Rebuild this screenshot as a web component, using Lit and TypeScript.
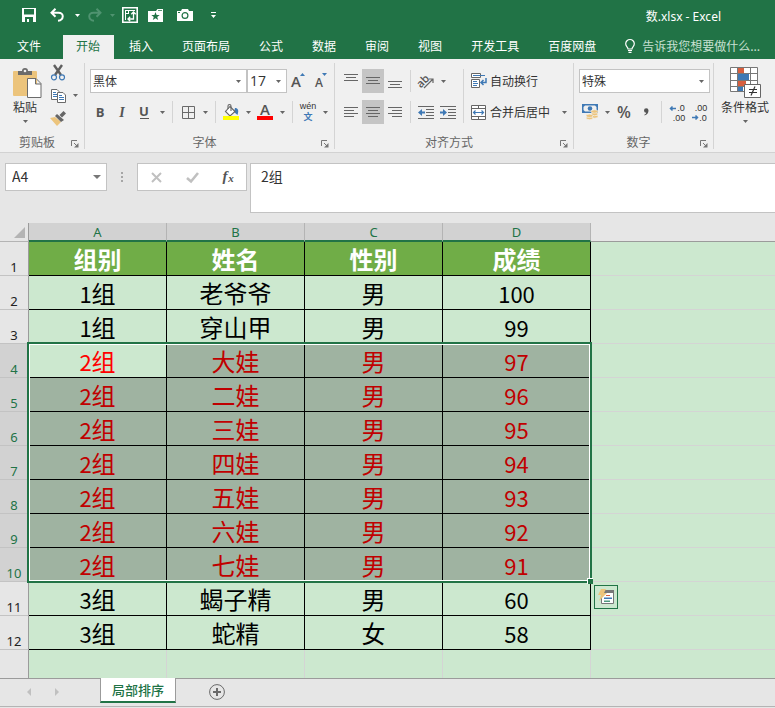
import { LitElement, html, css, svg, nothing } from "lit";
import { customElement, property } from "lit/decorators.js";
import { classMap } from "lit/directives/class-map.js";

const lines = (rows: number[][]) =>
  rows.map(([x, y, w]) => svg`<rect x=${x} y=${y} width=${w} height="1" fill="#666"/>`);

const grid = svg`<path fill="none" stroke="#6a6a6a" d="M.5 .5h12v12h-12zM6.5 0v13M0 6.5h13"/>`;

/* name -> [width, height, drawing] */
const ICONS: Record<string, [number, number, unknown]> = {
  save: [14, 14, svg`<path fill="#fff" fill-rule="evenodd" d="M0 0h14v14H0zM2 1v5.500h10V1zM3 9v5h2v-3h2v3h4V9z"/>`],
  undo: [14, 14, svg`<path fill="none" stroke="#fff" stroke-width="2" d="M5.500 .7L1.500 4.700l4 4M1.500 4.700H8.500c6 0 5.500 7.500-.5 8"/>`],
  redo: [14, 14, svg`<path fill="none" stroke="#4f9370" stroke-width="2" d="M8.500 .7l4 4-4 4M12.500 4.700H5.500c-6 0-5.500 7.500.5 8"/>`],
  pivot: [16, 16, svg`<path fill="none" stroke="#fff" stroke-width="1.600" d="M.8 .8h14.400v14.400H.8z"/><path fill="none" stroke="#fff" d="M3 3.500h10M3.500 3v10M6.500 3v3M3 6.500h4"/><path fill="none" stroke="#fff" stroke-width="1.300" d="M11.500 5v7H6M9.300 7.200l2.200-2.200 2.200 2.200M8.200 9.800L6 12l2.200 2.200"/>`],
  folder: [15, 13, svg`<path fill="#fff" d="M0 2h8l1.500-2H15v13H0z"/><path fill="#217346" d="M7.500 3l1.100 3h3.100L9.200 8l1 3.100-2.700-1.900-2.700 1.900 1-3.100L3.300 6h3.100zM10 1.200h4v.8h-4z"/>`],
  camera: [16, 12, svg`<path fill="#fff" d="M0 2h4l1-2h6l1 2h4v10H0z"/><circle cx="8" cy="6.500" r="2.900" fill="none" stroke="#217346" stroke-width="1.200"/><path fill="#217346" d="M1 3h2v1H1z"/>`],
  custom: [5, 6, svg`<path fill="#fff" d="M0 0h5v1H0zM0 3h5L2.500 6z"/>`],
  bulb: [10, 14, svg`<path fill="none" stroke="#fff" stroke-width="1.200" d="M3 10c0-2-2.300-2.500-2.300-5.200a4.300 4.300 0 0 1 8.600 0C9.300 7.500 7 8 7 10z"/><path fill="#fff" d="M3 11h4v1H3zM3.500 12.700h3v1.300h-3z"/>`],
  paste: [33, 31, svg`<g transform="translate(4 0)"><rect y="4" width="24" height="25" rx="1" fill="#ecc47c"/><path fill="#6b6b6b" d="M5 8V4h4a3 3 0 0 1 6 0h4v4z"/><circle cx="12" cy="4" r="1.300" fill="#f0f0f0"/><path fill="#fff" stroke="#6b6b6b" d="M14.500 11.500h8.500l5 5v14H14.500zM22.500 11.500v5.500H28"/></g>`],
  cut: [14, 16, svg`<path fill="none" stroke="#5f5f5f" stroke-width="2.400" d="M3 0l7 10M11 0L4 10"/><circle cx="3" cy="12.300" r="2.500" fill="none" stroke="#3f79b5" stroke-width="1.200"/><circle cx="11" cy="12.300" r="2.500" fill="none" stroke="#3f79b5" stroke-width="1.200"/>`],
  copy: [15, 14, svg`<path fill="#fff" stroke="#6b6b6b" d="M.5 .5H6l2 2v8H.5z"/><path stroke="#3f79b5" d="M2 3.500h3M2 5.500h4M2 7.500h4"/><path fill="#fff" stroke="#6b6b6b" d="M6.500 3.500H12l2.500 2.500v7.500h-8z"/><path stroke="#3f79b5" d="M8 6.500h3M8 8.500h5M8 10.500h5"/>`],
  brush: [16, 15, svg`<path fill="#ecc47c" d="M0 7l5-1 6 5-4 4z"/><path fill="#666" d="M5 5l2-2 7 6-3 2z"/><path fill="#666" d="M9.500 4L13.500 0 16 2.500 12 6.500z"/>`],
  bold: [22, 22, svg`<text x="10" y="16" class="g b">B</text>`],
  italic: [22, 22, svg`<text x="10" y="16" class="g s">I</text>`],
  underline: [22, 22, svg`<text x="10" y="15" class="g b">U</text><rect x="6" y="17" width="9" height="1" fill="#555"/>`],
  grow: [16, 18, svg`<text x="6" y="15" class="g m">A</text><path fill="#3f79b5" d="M10 4h5l-2.500-3z"/>`],
  shrink: [16, 18, svg`<text x="7" y="15" class="g n">A</text><path fill="#3f79b5" d="M10 1h5l-2.500 3z"/>`],
  borders: [13, 13, grid],
  fill: [16, 16, svg`<path fill="#3f79b5" d="M12 4c3 0 4 2 2.500 7L11 8z"/><path fill="#fff" stroke="#666" stroke-width="1.100" d="M7 2.500l5 5L7 12 2.500 7.500z"/><path fill="none" stroke="#666" stroke-width="1.100" d="M5 5V2q0-1.500 1.500-1.500T8 2v5"/><rect y="12" width="16" height="4" fill="#ff0"/>`],
  color: [16, 16, svg`<text x="8" y="11" class="g b m">A</text><rect y="12" width="16" height="4" fill="red"/>`],
  wen: [20, 20, svg`<text x="10" y="7" class="g w">wén</text><text x="10" y="18" class="g cn">文</text>`],
  top: [14, 14, lines([[0, 0, 14], [2, 3, 10], [0, 6, 14]])],
  middle: [14, 14, lines([[0, 3, 14], [2, 6, 10], [0, 9, 14]])],
  bottom: [14, 14, lines([[0, 7, 14], [2, 10, 10], [0, 13, 14]])],
  left: [14, 11, lines([[0, 0, 14], [0, 3, 10], [0, 6, 14], [0, 9, 10]])],
  center: [14, 11, lines([[0, 0, 14], [2, 3, 10], [0, 6, 14], [2, 9, 10]])],
  right: [14, 11, lines([[0, 0, 14], [4, 3, 10], [0, 6, 14], [4, 9, 10]])],
  orient: [18, 16, svg`<text x="6" y="11" class="g o" transform="rotate(-45 7 8)">ab</text><path fill="none" stroke="#666" stroke-width="1.200" d="M7 15l8.500-8.500M12 6h4v4"/>`],
  outdent: [16, 13, svg`${lines([[0, 0, 16], [8, 3, 8], [8, 6, 8], [8, 9, 8], [0, 12, 16]])}<path fill="#3f79b5" d="M0 6.500L4 3v2.500h3v2H4V10z"/>`],
  indent: [16, 13, svg`${lines([[0, 0, 16], [8, 3, 8], [8, 6, 8], [8, 9, 8], [0, 12, 16]])}<path fill="#3f79b5" d="M7 6.500L3 3v2.500H0v2h3V10z"/>`],
  wrap: [16, 16, svg`<path fill="#fff" stroke="#666" d="M9.500 4.500V.5h-9v4zM.5 6.500h8v8h-8z"/><path stroke="#3f79b5" d="M2 2.500h12M2 8.500h4M2 10.500h5M2 12.500h4"/><path fill="none" stroke="#3f79b5" stroke-width="1.500" d="M15 5v4.500h-4.500M12.500 7l-2.500 2.500L12.500 12"/>`],
  merge: [15, 15, svg`<path fill="#fff" stroke="#666" d="M.5 .5h14v14H.5zM0 3.500h15M0 11.500h15M7.500 0v3.500M7.500 11.500v3"/><path fill="none" stroke="#3f79b5" stroke-width="1.200" d="M2 7.500h11M4.500 5.500l-2 2 2 2M10.500 5.500l2 2-2 2"/>`],
  money: [16, 16, svg`<path fill="#3f79b5" d="M0 0h16v9H0z"/><path fill="#f0f0f0" d="M3 1.500h10l1.500 1.500v3L13 7.500H3L1.500 6V3z"/><circle cx="8" cy="4.500" r="2.300" fill="#3f79b5"/><g fill="#ecc47c" stroke="#f0f0f0" stroke-width=".7"><ellipse cx="12.500" cy="12.500" rx="3.500" ry="1.700"/><ellipse cx="12.500" cy="10" rx="3.500" ry="1.700"/><ellipse cx="12.500" cy="7.500" rx="3.500" ry="1.700"/><ellipse cx="7.500" cy="14" rx="3.500" ry="1.700"/><ellipse cx="7.500" cy="11.800" rx="3.500" ry="1.700"/></g>`],
  percent: [22, 22, svg`<text x="11" y="17" class="g p">%</text>`],
  comma: [6, 8, svg`<path fill="#555" d="M1 2.500a2.200 2.200 0 0 1 4.500 0C5.500 5 4 7 1.500 7.500v-1C2.700 6 3.200 5.500 3.200 4.700A2.200 2.200 0 0 1 1 2.500z"/>`],
  decinc: [16, 17, svg`<path fill="none" stroke="#3f79b5" stroke-width="1.500" d="M1 4.500h6M3.500 2.500l-2 2 2 2"/><text x="12" y="7" class="g d">.0</text><text x="10" y="17" class="g d">.00</text>`],
  decdec: [16, 17, svg`<text x="10" y="7" class="g d">.00</text><path fill="none" stroke="#3f79b5" stroke-width="1.500" d="M1 13.500h6M4.500 11.500l2 2-2 2"/><text x="12" y="17" class="g d">.0</text>`],
  condition: [31, 31, svg`<path fill="#fff" d="M1 1h27v24H1z"/><path fill="#d75f3f" d="M8 1h6v6H8zM8 14h8v6H8z"/><path fill="#3f79b5" d="M8 7h11v6H8zM8 20h5v5H8z"/><path fill="none" stroke="#777" d="M.5 .5h27v24H.5zM7.500 0v25M20.500 0v20M0 6.500h28M0 13.500h28M0 19.500h28"/><path fill="#fff" stroke="#666" d="M14.500 17.500h16v13h-16z"/><path fill="none" stroke="#333" stroke-width="1.200" d="M19 22.500h8M19 25.500h8M25 19.500l-4 9"/>`],
  launch: [8, 8, svg`<path fill="none" stroke="#777" d="M.5 6V.5H6M3 3l3 3"/><path fill="#777" d="M7.500 3v4.500H3z"/>`],
  arrow: [5, 3, svg`<path fill="currentColor" d="M0 0h5L2.500 3z"/>`],
  name: [8, 4, svg`<path fill="#777" d="M0 0h8L4 4z"/>`],
  dots: [2, 11, svg`<path fill="#a6a6a6" d="M0 0h2v2H0zM0 4h2v2H0zM0 8h2v2H0z"/>`],
  cancel: [11, 11, svg`<path stroke="#c0c0c0" stroke-width="2" d="M1 1l9 9M10 1l-9 9"/>`],
  accept: [13, 11, svg`<path fill="none" stroke="#c0c0c0" stroke-width="2.600" d="M1 6l4 3.500L12 1"/>`],
  fx: [16, 16, svg`<text x="5" y="12" class="g f">f</text><text x="11" y="13" class="g x">x</text>`],
  corner: [11, 11, svg`<path fill="#b4b4b4" d="M11 0v11H0z"/>`],
  prev: [4, 8, svg`<path fill="#c0c0c0" d="M4 0v8L0 4z"/>`],
  next: [4, 8, svg`<path fill="#c0c0c0" d="M0 0v8l4-4z"/>`],
  plus: [16, 16, svg`<circle cx="8" cy="8" r="7.400" fill="none" stroke="#6a6a6a"/><path stroke="#6a6a6a" stroke-width="2" d="M4 8h8M8 4v8"/>`],
  tag: [16, 16, svg`<path fill="#fff" stroke="#777" d="M3.500 2.500h12v12h-12z"/><path fill="#777" d="M4 1h12v3H4z"/><path fill="#d75f3f" d="M8 6h4v1H8z"/><path fill="#3f79b5" d="M6 8.500h8V10H6z"/><path fill="#4f9b7f" d="M6 11.500h6V13H6z"/><path fill="#ecc47c" d="M3 0h5L6 4h3L1 12l2-6H0z"/>`],
};

@customElement("x-icon")
class XIcon extends LitElement {
  @property() name = "";
  static styles = css`
    :host { display: inline-flex; flex: none; }
    svg { display: block; overflow: visible; }
    .g { font: 13px "Open Sans", sans-serif; fill: #555; text-anchor: middle; }
    .b { font-weight: 700; }
    .s { font: italic bold 14px "Liberation Serif", serif; }
    .m { font-size: 15px; font-weight: 600; }
    .n { font-size: 12px; font-weight: 600; }
    .w { font: 9px "Liberation Sans", sans-serif; fill: #333; }
    .cn { font: bold 9px "Noto Sans CJK SC", sans-serif; fill: #3f79b5; }
    .o { font-size: 11px; font-weight: 600; }
    .p { font-size: 16px; font-weight: 600; }
    .d { font: 9px "Liberation Sans", sans-serif; fill: #333; }
    .f { font: italic bold 15px "Liberation Serif", serif; }
    .x { font: italic bold 11px "Liberation Serif", serif; }
  `;
  render() {
    const [w, h, body] = ICONS[this.name];
    return html`<svg width=${w} height=${h} viewBox="0 0 ${w} ${h}" aria-hidden="true">${body}</svg>`;
  }
}

const TABS = ["文件", "开始", "插入", "页面布局", "公式", "数据", "审阅", "视图", "开发工具", "百度网盘"];
const COLUMNS = ["A", "B", "C", "D"];
const HEADINGS = ["组别", "姓名", "性别", "成绩"];
const ROWS: [string, string, string, string][] = [
  ["1", "老爷爷", "男", "100"],
  ["1", "穿山甲", "男", "99"],
  ["2", "大娃", "男", "97"],
  ["2", "二娃", "男", "96"],
  ["2", "三娃", "男", "95"],
  ["2", "四娃", "男", "94"],
  ["2", "五娃", "男", "93"],
  ["2", "六娃", "男", "92"],
  ["2", "七娃", "男", "91"],
  ["3", "蝎子精", "男", "60"],
  ["3", "蛇精", "女", "58"],
];
const SELECTED = { from: 4, to: 10 };
const HEAD_HEIGHT = 19;
const ROW_HEIGHT = 34;

@customElement("app-root")
class AppRoot extends LitElement {
  static styles = css`
    :host {
      display: flex; flex-direction: column; min-height: 100vh; overflow: hidden;
      background: #e6e6e6; color: #333;
      font: 12px/16px "Noto Sans CJK SC", sans-serif;
    }
    * { box-sizing: border-box; }
    button, input, select, textarea {
      font: inherit; color: inherit; background: none; border: 0; margin: 0; padding: 0;
      border-radius: 0; outline: none; appearance: none;
    }
    button { display: flex; align-items: center; justify-content: center; flex: none; white-space: nowrap; }

    header { background: #217346; color: #fff; }
    .title { display: flex; align-items: center; height: 32px; padding: 0 54px 2px 18px; }
    .title h1 { font: 12px/16px "Noto Sans", "Noto Sans CJK SC", sans-serif; margin: 4px 0 0 auto; }
    .q { width: 22px; height: 22px; }
    .qa { width: 12px; height: 22px; margin-right: 1px; }
    .wide { width: 29px; }
    .undo { margin-left: 2px; }
    .off { color: #4f9370; }
    .tabs { display: flex; align-items: flex-end; height: 27px; }
    .tab { height: 24px; margin: 0 1px; padding: 0 14px 2px 13px; }
    .tab.file { padding: 0 20px 2px 16px; }
    .tab.on { background: #f0f0f0; color: #217346; }
    .tell { display: flex; align-items: center; flex: 1; min-width: 0; height: 24px; gap: 7px; padding: 0 4px 2px 14px; }
    .tell input { flex: 1; min-width: 0; color: #c8e0d2; }

    .ribbon { display: flex; height: 94px; background: #f0f0f0; border-bottom: 1px solid #d2d2d2; }
    .group { display: flex; flex-direction: column; justify-content: space-between; flex: none; padding: 3px 3px 0 5px; border-right: 1px solid #d4d4d4; margin: 4px 0 3px; }
    .group.last { border: 0; justify-content: flex-start; }
    .rows { display: flex; flex-direction: column; gap: 7px; padding-top: 3px; }
    .row { display: flex; align-items: center; height: 24px; }
    .caption { display: flex; align-items: center; height: 14px; color: #666; text-align: center; }
    .caption span { flex: 1; }
    .caption button { width: 12px; height: 14px; padding-top: 4px; }
    .ib { width: 22px; height: 24px; }
    .ib.on { background: #c5c5c5; }
    .ar { width: 12px; height: 22px; color: #666; }
    .sep { width: 1px; height: 22px; margin: 0 4px; background: #d4d4d4; flex: none; }
    .tall { height: 54px; }
    .clip { display: flex; gap: 4px; }
    .big { flex-direction: column; justify-content: flex-start; width: 40px; height: 60px; padding-top: 1px; gap: 1px; color: #333; }
    .big .drop { color: #666; padding-top: 4px; }
    .stack { display: flex; flex-direction: column; margin: -5px 0 0 -2px; }
    .stack .line { display: flex; height: 23px; align-items: center; }
    .styles .big { width: 52px; }
    .pick { position: relative; display: flex; height: 24px; border: 1px solid #c3c3c3; background: #fff; color: #333; align-items: center; flex: none; }
    .pick select { flex: 1; min-width: 0; padding-left: 2px; height: 20px; }
    .pick x-icon { position: absolute; right: 5px; color: #666; pointer-events: none; }
    .font { width: 157px; }
    .size { width: 40px; }
    .size select { font: 14px/18px "Open Sans", sans-serif; }
    .number { width: 131px; }
    .columns { display: flex; }
    .label { justify-content: flex-start; gap: 3px; padding-left: 3px; height: 24px; }
    .label x-icon { width: 16px; }
    .fill { width: 102px; justify-content: space-between; }

    .formula { display: flex; align-items: flex-start; height: 70px; padding: 10px 0 0 5px; font: 14px/18px "Noto Sans CJK SC", sans-serif; }
    .box { display: flex; align-items: center; height: 28px; background: #fff; border: 1px solid #c3c3c3; flex: none; }
    .namebox { width: 102px; }
    .namebox input { flex: 1; min-width: 0; padding: 0 0 2px 6px; }
    .namebox button { width: 18px; height: 26px; }
    .dots { display: flex; justify-content: center; align-items: center; width: 30px; height: 28px; }
    .actions { width: 110px; margin-right: 3px; }
    .actions button { width: 36px; height: 26px; }
    .formula textarea { flex: 1; min-width: 0; height: 50px; padding: 3px 10px; background: #fff; border: 1px solid #c3c3c3; border-right: 0; resize: none; overflow: hidden; }

    .sheet { position: relative; flex: 1; background: #cce8cf; }
    table { width: 100%; table-layout: fixed; border-collapse: separate; border-spacing: 0; }
    .c0 { width: 29px; } .c1 { width: 138px; } .c4 { width: 148px; }
    th, td { padding: 0; font-weight: 400; text-align: center; overflow: hidden; white-space: nowrap; }
    thead th { height: 19px; background: #d2d2d2; border-right: 1px solid #b4b4b4; border-bottom: 2px solid #217346; color: #217346; font: 13px/16px "Noto Sans", sans-serif; }
    thead th.all { background: #e6e6e6; border-right-color: #9b9b9b; border-bottom: 1px solid #b4b4b4; }
    thead th.rest { background: #e6e6e6; border-right: 0; border-bottom: 1px solid #9b9b9b; }
    .all x-icon { display: flex; justify-content: flex-end; padding: 1px 3px 0 0; }
    tbody th { height: 34px; vertical-align: bottom; background: #e6e6e6; border-right: 1px solid #9b9b9b; border-bottom: 1px solid #c3c3c3; color: #222; font: 13px/16px "Noto Sans", sans-serif; }
    tbody tr.sel th { background: #d2d2d2; color: #217346; }
    td { height: 34px; border-right: 1px solid #000; border-bottom: 1px solid #000; color: #000; font-size: 24px; line-height: 30px; }
    td.rest { border-right: 0; border-bottom-color: #d4d4d4; }
    tr.heads td:not(.rest) { background: #70ad47; color: #fff; font-weight: 700; }
    .num { font-size: 22px; }
    tr.sel td:not(.rest) { background: #9fb3a1; color: #c00000; }
    tr.sel td.active { background: #cce8cf; color: #f00; }
    tr.blank th, tr.blank td { height: 28px; border-bottom: 0; border-right-color: #d4d4d4; }
    tr.blank th { border-right-color: #9b9b9b; }
    .selection { position: absolute; left: 27px; width: 565px; border: 2px solid #217346; box-shadow: inset 0 0 0 1px #fff; pointer-events: none; }
    .selection i { position: absolute; right: -3px; bottom: -3px; width: 6px; height: 6px; background: #217346; border: solid #fff; border-width: 1px 0 0 1px; }
    .tag { position: absolute; left: 594px; width: 24px; height: 24px; border: 1px solid #217346; background: #cce8cf; }

    footer { display: flex; align-items: flex-start; height: 30px; border-top: 1px solid #9b9b9b; flex: none; padding-left: 15px; background: linear-gradient(#b4b4b4, #b4b4b4) 0 27px / 100% 1px no-repeat #e6e6e6; }
    footer button { width: 28px; height: 26px; }
    footer .sheet-tab { width: 76px; height: 25px; margin: -1px 27px 0 29px; background: #fff; border: 1px solid #9b9b9b; border-width: 0 1px 2px; border-bottom-color: #217346; color: #217346; font-size: 13px; font-weight: 500; }
  `;

  private ib(name: string, label: string, on = false) {
    return html`<button class=${classMap({ ib: true, on })} aria-label=${label}><x-icon name=${name}></x-icon></button>`;
  }
  private ar(label: string) {
    return html`<button class="ar" aria-label=${label}><x-icon name="arrow"></x-icon></button>`;
  }
  private pick(kind: string, label: string, value: string) {
    return html`<div class="pick ${kind}"><select aria-label=${label}><option>${value}</option></select><x-icon name="arrow"></x-icon></div>`;
  }
  private caption(text: string) {
    return html`<div class="caption"><span>${text}</span><button aria-label="${text}设置"><x-icon name="launch"></x-icon></button></div>`;
  }

  private header() {
    return html`<header>
      <div class="title">
        <button class="q" aria-label="保存"><x-icon name="save"></x-icon></button>
        <button class="q undo wide" aria-label="撤消"><x-icon name="undo"></x-icon></button>
        <button class="qa" aria-label="撤消列表"><x-icon name="arrow"></x-icon></button>
        <button class="q" aria-label="恢复"><x-icon name="redo"></x-icon></button>
        <button class="qa off" aria-label="恢复列表"><x-icon name="arrow"></x-icon></button>
        <button class="q" aria-label="数据透视表"><x-icon name="pivot"></x-icon></button>
        <button class="q wide" aria-label="收藏夹"><x-icon name="folder"></x-icon></button>
        <button class="q wide" aria-label="照相机"><x-icon name="camera"></x-icon></button>
        <button class="q wide" aria-label="自定义快速访问工具栏"><x-icon name="custom"></x-icon></button>
        <h1>数.xlsx - Excel</h1>
      </div>
      <nav class="tabs">
        ${TABS.map((t, i) => html`<button class=${classMap({ tab: true, file: i === 0, on: i === 1 })}>${t}</button>`)}
        <label class="tell"><x-icon name="bulb"></x-icon><input aria-label="操作说明搜索" value="告诉我您想要做什么..." /></label>
      </nav>
    </header>`;
  }

  private ribbon() {
    const sep = html`<span class="sep"></span>`;
    return html`<section class="ribbon">
      <div class="group">
        <div class="clip">
          <button class="big"><x-icon name="paste"></x-icon><span>粘贴</span><x-icon class="drop" name="arrow"></x-icon></button>
          <div class="stack">
            <div class="line">${this.ib("cut", "剪切")}</div>
            <div class="line">${this.ib("copy", "复制")}${this.ar("复制选项")}</div>
            <div class="line">${this.ib("brush", "格式刷")}</div>
          </div>
        </div>
        ${this.caption("剪贴板")}
      </div>
      <div class="group">
        <div class="rows">
          <div class="row">${this.pick("font", "字体", "黑体")}${this.pick("size", "字号", "17")}${this.ib("grow", "增大字号")}${this.ib("shrink", "减小字号")}</div>
          <div class="row">
            ${this.ib("bold", "加粗")}${this.ib("italic", "倾斜")}${this.ib("underline", "下划线")}${this.ar("下划线选项")}${sep}
            ${this.ib("borders", "边框")}${this.ar("边框选项")}${sep}
            ${this.ib("fill", "填充颜色")}${this.ar("填充选项")}${this.ib("color", "字体颜色")}${this.ar("颜色选项")}${sep}
            ${this.ib("wen", "拼音")}${this.ar("拼音选项")}
          </div>
        </div>
        ${this.caption("字体")}
      </div>
      <div class="group">
        <div class="columns">
          <div class="rows">
            <div class="row">${this.ib("top", "顶端对齐")}${this.ib("middle", "垂直居中", true)}${this.ib("bottom", "底端对齐")}${sep}${this.ib("orient", "方向")}${this.ar("方向选项")}</div>
            <div class="row">${this.ib("left", "左对齐")}${this.ib("center", "居中", true)}${this.ib("right", "右对齐")}${sep}${this.ib("outdent", "减少缩进量")}${this.ib("indent", "增加缩进量")}</div>
          </div>
          <div class="rows"><span class="sep tall"></span></div>
          <div class="rows">
            <div class="row"><button class="label"><x-icon name="wrap"></x-icon>自动换行</button></div>
            <div class="row fill"><button class="label"><x-icon name="merge"></x-icon>合并后居中</button>${this.ar("合并选项")}</div>
          </div>
        </div>
        ${this.caption("对齐方式")}
      </div>
      <div class="group">
        <div class="rows">
          <div class="row">${this.pick("number", "数字格式", "特殊")}</div>
          <div class="row">${this.ib("money", "会计数字格式")}${this.ar("会计格式选项")}${this.ib("percent", "百分比样式")}${this.ib("comma", "千位分隔样式")}${sep}${this.ib("decinc", "增加小数位数")}${this.ib("decdec", "减少小数位数")}</div>
        </div>
        ${this.caption("数字")}
      </div>
      <div class="group last styles">
        <button class="big"><x-icon name="condition"></x-icon><span>条件格式</span><x-icon class="drop" name="arrow"></x-icon></button>
      </div>
    </section>`;
  }

  private formulaBar() {
    return html`<section class="formula">
      <div class="box namebox"><input aria-label="名称框" value="A4" /><button aria-label="名称列表"><x-icon name="name"></x-icon></button></div>
      <span class="dots"><x-icon name="dots"></x-icon></span>
      <div class="box actions">
        <button aria-label="取消"><x-icon name="cancel"></x-icon></button>
        <button aria-label="输入"><x-icon name="accept"></x-icon></button>
        <button aria-label="插入函数"><x-icon name="fx"></x-icon></button>
      </div>
      <textarea aria-label="编辑栏" .value=${"2组"}></textarea>
    </section>`;
  }

  private sheet() {
    const top = HEAD_HEIGHT + (SELECTED.from - 1) * ROW_HEIGHT - 2;
    const height = (SELECTED.to - SELECTED.from + 1) * ROW_HEIGHT + 3;
    return html`<main class="sheet">
      <table>
        <colgroup><col class="c0" /><col class="c1" /><col class="c1" /><col class="c1" /><col class="c4" /><col /></colgroup>
        <thead><tr><th class="all"><x-icon name="corner"></x-icon></th>${COLUMNS.map((c) => html`<th scope="col">${c}</th>`)}<th class="rest"></th></tr></thead>
        <tbody>
          <tr class="heads"><th scope="row">1</th>${HEADINGS.map((h) => html`<td>${h}</td>`)}<td class="rest"></td></tr>
          ${ROWS.map(([team, name, sex, score], i) => {
            const n = i + 2;
            const sel = n >= SELECTED.from && n <= SELECTED.to;
            return html`<tr class=${sel ? "sel" : nothing}>
              <th scope="row">${n}</th>
              <td class=${n === SELECTED.from ? "active" : nothing}><span class="num">${team}</span>组</td>
              <td>${name}</td><td>${sex}</td><td class="num">${score}</td><td class="rest"></td>
            </tr>`;
          })}
          <tr class="blank"><th></th><td></td><td></td><td></td><td></td><td class="rest"></td></tr>
        </tbody>
      </table>
      <div class="selection" style="top:${top}px;height:${height}px"><i></i></div>
      <button class="tag" aria-label="快速分析" style="top:${top + height + 2}px"><x-icon name="tag"></x-icon></button>
    </main>`;
  }

  render() {
    return html`${this.header()}${this.ribbon()}${this.formulaBar()}${this.sheet()}
      <footer>
        <button aria-label="上一张工作表"><x-icon name="prev"></x-icon></button>
        <button aria-label="下一张工作表"><x-icon name="next"></x-icon></button>
        <button class="sheet-tab">局部排序</button>
        <button aria-label="新工作表"><x-icon name="plus"></x-icon></button>
      </footer>`;
  }
}
